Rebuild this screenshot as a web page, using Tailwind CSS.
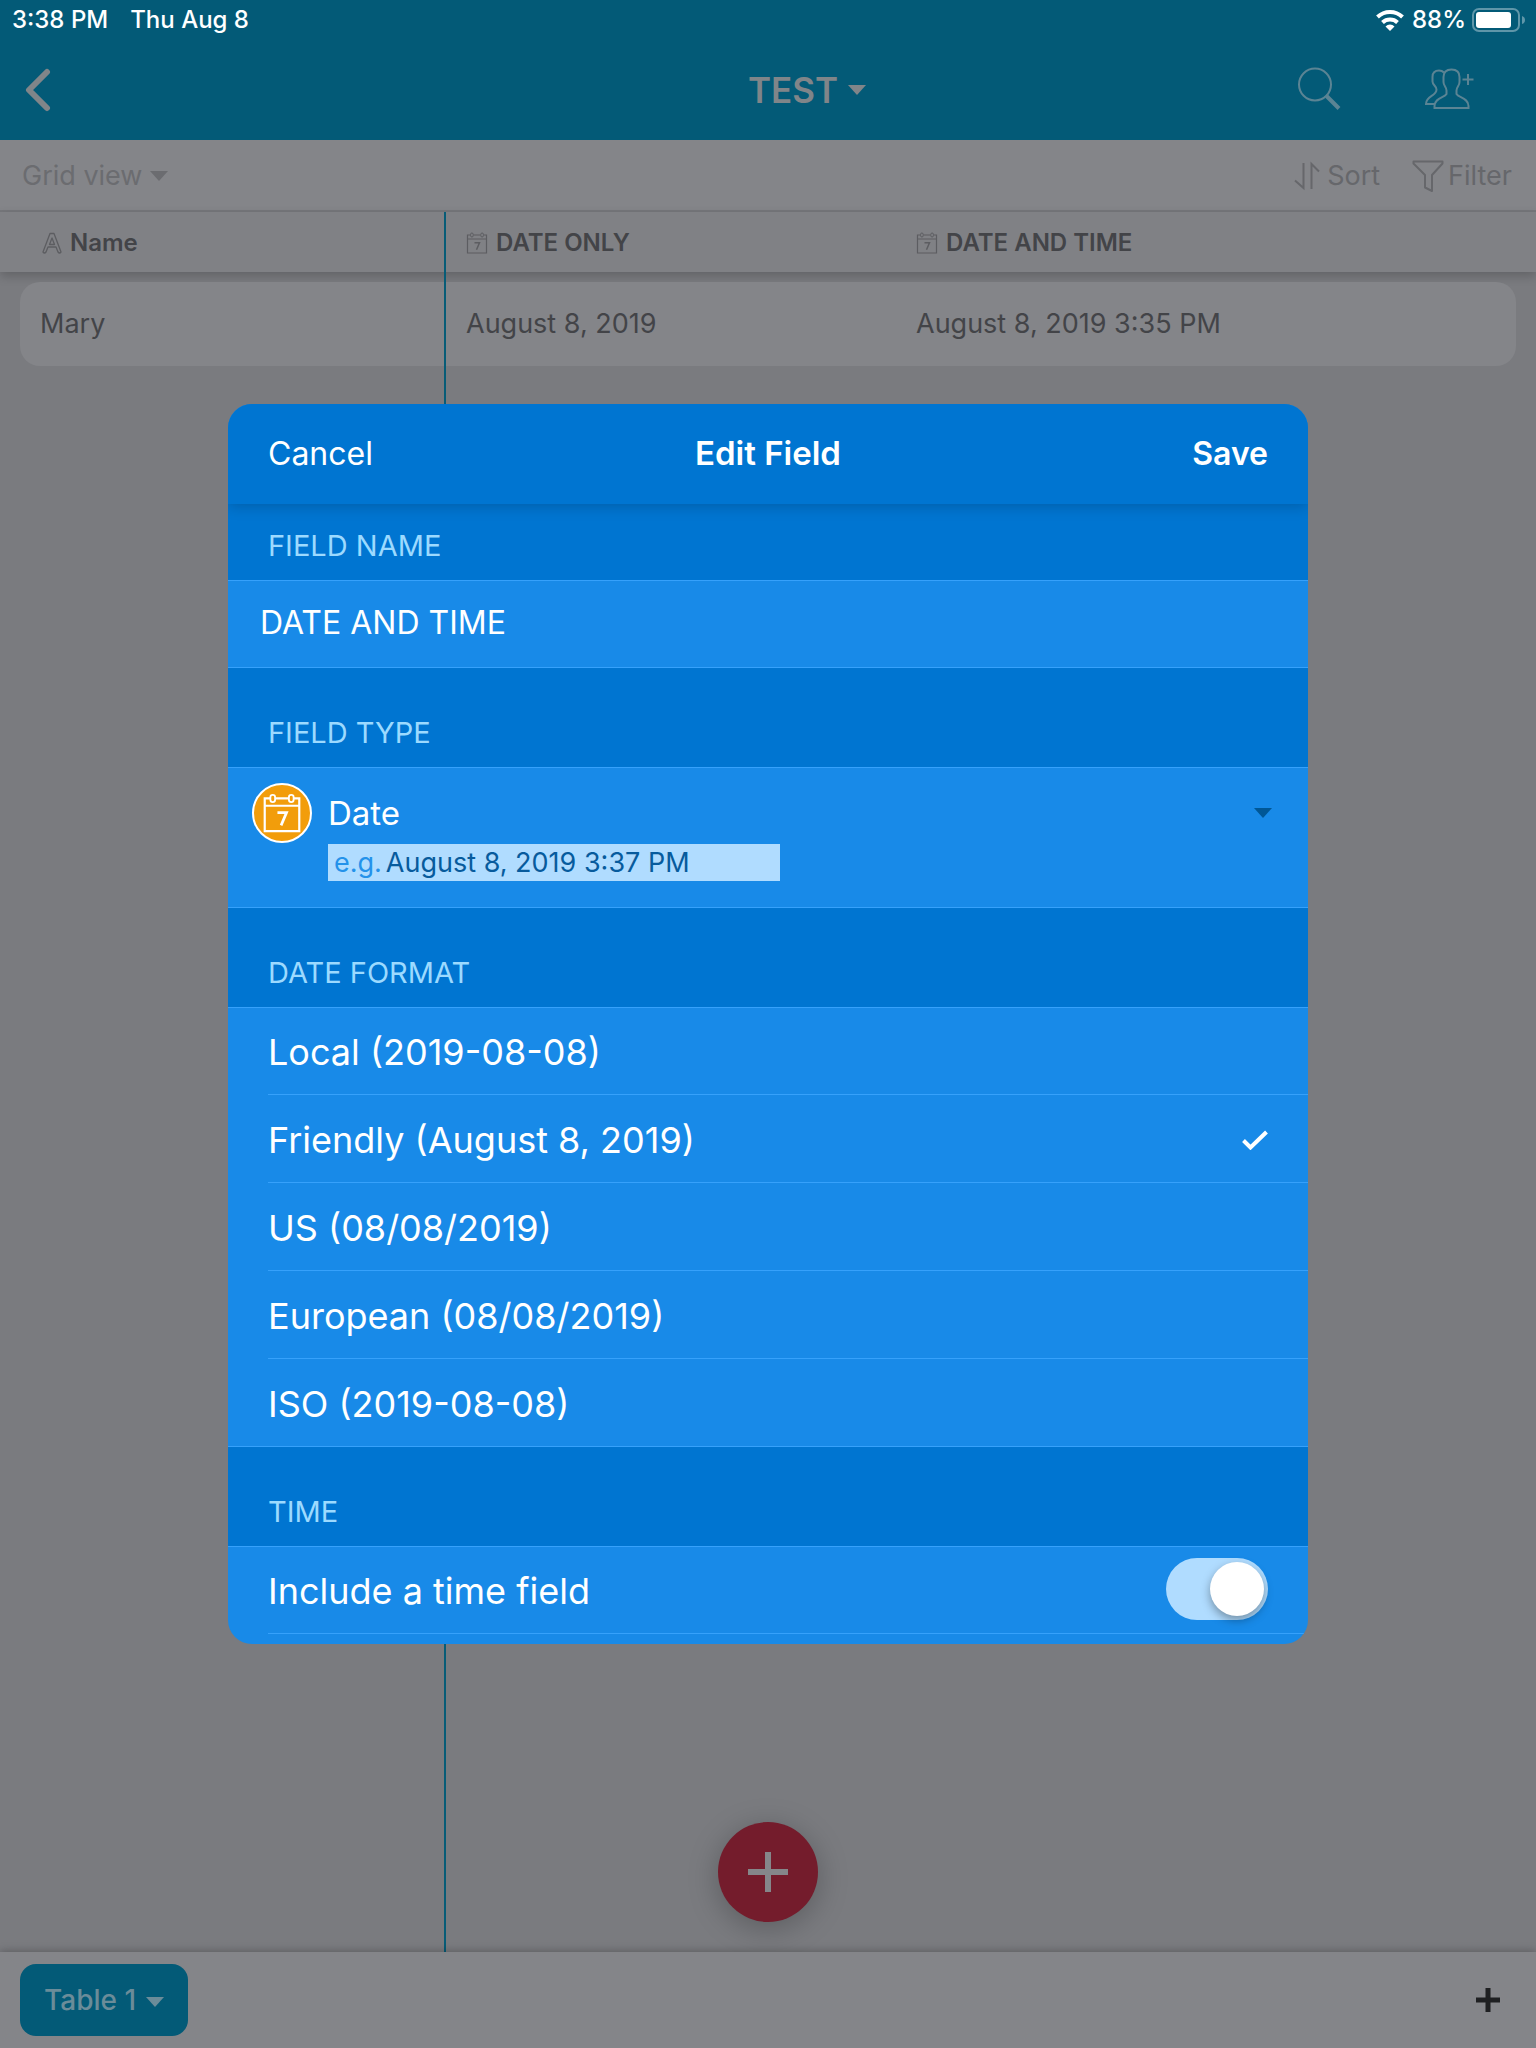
<!DOCTYPE html>
<html lang="en">
<head>
  <meta charset="UTF-8" />
  <meta name="viewport" content="width=device-width, initial-scale=1" />
  <title>TEST - Edit Field</title>
  <script src="https://cdn.jsdelivr.net/npm/@tailwindcss/browser@4"></script>
</head>
<body class="relative flex min-h-screen flex-col bg-[#7a7b7f] font-['Inter','Liberation_Sans',sans-serif]">

<svg class="hidden">
  <symbol id="calendar" viewBox="0 0 22 24">
    <path d="M4.500 4H1.500v18h19V4h-3M7.500 4h7M1.500 8h19" fill="none" stroke="currentColor" stroke-width="1.200" />
    <rect x="4.600" y="2" width="2.600" height="4" rx="1.300" fill="none" stroke="currentColor" />
    <rect x="14.800" y="2" width="2.600" height="4" rx="1.300" fill="none" stroke="currentColor" />
    <path d="M8.500 11.800h5l-3 7" fill="none" stroke="currentColor" stroke-width="1.500" />
  </symbol>
  <symbol id="caret" viewBox="0 0 18 10">
    <path d="M0 0h18L9 10z" fill="currentColor" />
  </symbol>
</svg>

<!-- Top bar -->
<header class="bg-[#035a77]">
  <div class="flex h-10 items-center justify-between pl-3 pr-2.5 text-2xl font-medium text-white">
    <div class="flex gap-[22px]">
      <span>3:38 PM</span>
      <span>Thu Aug 8</span>
    </div>
    <div class="flex items-center gap-1.5">
      <svg class="h-6 w-8" viewBox="0 0 32 24" fill="none" stroke="#fff" stroke-width="4">
        <path d="M3.500 9a18 18 0 0 1 25 0" />
        <path d="M8.500 14.500a11 11 0 0 1 15 0" />
        <path d="M16 23l-4.500-4.600a6.500 6.500 0 0 1 9 0z" fill="#fff" stroke="none" />
      </svg>
      <span>88%</span>
      <svg class="h-6 w-[54px]" viewBox="0 0 54 24">
        <rect x="1" y="1" width="46" height="22" rx="6" fill="none" stroke="#5f96a9" stroke-width="2" />
        <rect x="4" y="4" width="35" height="16" rx="3" fill="#fff" />
        <path d="M50 8q3 1 3 4t-3 4z" fill="#5f96a9" />
      </svg>
    </div>
  </div>
  <div class="grid h-[100px] grid-cols-[1fr_auto_1fr] items-center text-[#808589]">
    <button class="ml-6 w-8" aria-label="Back">
      <svg class="h-11 w-7" viewBox="0 0 28 44" fill="none" stroke="currentColor" stroke-width="6" stroke-linecap="round" stroke-linejoin="round">
        <path d="M23 4L5 22l18 18" />
      </svg>
    </button>
    <button class="ml-[78px] flex items-center gap-2.5 text-[35px] font-semibold">
      TEST
      <svg class="h-2.5 w-[18px]"><use href="#caret" /></svg>
    </button>
    <div class="flex items-center justify-end gap-[83px] pr-[60px] pb-0.5 text-[#5b8494]">
      <button aria-label="Search">
        <svg class="size-11" viewBox="0 0 44 44" fill="none" stroke="currentColor">
          <circle cx="18" cy="17.500" r="16" stroke-width="2" />
          <path d="M29.500 29L42 41.500" stroke-width="4" />
        </svg>
      </button>
      <button aria-label="Share">
        <svg class="h-11 w-[52px]" viewBox="0 0 52 44" fill="none" stroke="currentColor" stroke-width="2">
          <path d="M27.500 2.500c5.500 0 8 3 8 7.500v5c0 4-3 5-3 8.500v3.500c2 3.500 12 4 12 12v2h-34v-2c0-8 10-8.500 12-12v-3.500c0-3.500-3-4.500-3-8.500v-5c0-4.500 2.500-7.500 8-7.500z" />
          <path d="M20 5.500c-1.500-1.500-3-2-5-2-4.500 0-6.500 2.500-6.500 6.500v4.500c0 3.500 4 4.500 4 8 0 7-10.500 6-10.500 14.500h9" />
          <path d="M38.500 12.500h11M44 7v11" />
        </svg>
      </button>
    </div>
  </div>
</header>

<!-- View bar -->
<div class="flex h-[72px] items-center justify-between border-b-2 border-[#76777b] bg-[#848589] pt-0.5 pl-[22px] pr-6 text-[27px] text-[#6b6c70]">
  <button class="flex items-center gap-2">
    Grid view
    <svg class="h-2.5 w-[18px]"><use href="#caret" /></svg>
  </button>
  <div class="flex gap-8 text-[#66676b]">
    <button class="flex items-center gap-1.5">
      <svg class="h-8 w-7" viewBox="0 0 28 32" fill="none" stroke="currentColor" stroke-width="2">
        <path d="M10.500 3v25L2 20.500M18.500 29V4l7.500 7.500" />
      </svg>
      Sort
    </button>
    <button class="flex items-center gap-1">
      <svg class="h-8 w-8" viewBox="0 0 32 32" fill="none" stroke="currentColor" stroke-width="2" stroke-linejoin="round">
        <path d="M1.500 1.500h29v2L20 15v16l-7-3.500V15L1.500 3.500z" />
      </svg>
      Filter
    </button>
  </div>
</div>

<!-- Grid -->
<main class="relative grow">
  <table class="w-full table-fixed border-separate border-spacing-0 text-left text-[27px] text-[#434448]">
    <thead class="shadow-[0_4px_10px_rgb(0_0_0/0.2)]">
      <tr class="h-[60px] bg-[#808185] text-2xl">
        <th class="w-[446px] pt-0.5 pl-[42px] font-semibold">
          <div class="flex items-center gap-2">
            <svg class="h-6 w-5 text-[#5c5d61]" viewBox="0 0 20 24" fill="none" stroke="currentColor" stroke-linejoin="round">
              <path d="M8 2.500h4L19 21q-1.500 2-3 0l-2-5H6l-2 5q-1.500 2-3 0zM10 7l-2.500 6.500h5z" stroke-width="1.300" />
            </svg>
            Name
          </div>
        </th>
        <th class="w-[450px] pt-0.5 pl-5 font-semibold">
          <div class="flex items-center gap-2">
            <svg class="h-6 w-[22px] text-[#5c5d61]"><use href="#calendar" /></svg>
            DATE ONLY
          </div>
        </th>
        <th class="pt-0.5 pl-5 font-semibold">
          <div class="flex items-center gap-2">
            <svg class="h-6 w-[22px] text-[#5c5d61]"><use href="#calendar" /></svg>
            DATE AND TIME
          </div>
        </th>
      </tr>
    </thead>
    <tbody>
      <tr>
        <td class="pt-2.5 pl-5"><div class="flex h-[84px] items-center rounded-l-[20px] bg-[#848589] pl-5">Mary</div></td>
        <td class="pt-2.5"><div class="flex h-[84px] items-center bg-[#848589] pl-5">August 8, 2019</div></td>
        <td class="pt-2.5 pr-5"><div class="flex h-[84px] items-center rounded-r-[20px] bg-[#848589] pl-5">August 8, 2019 3:35 PM</div></td>
      </tr>
    </tbody>
  </table>
  <div class="absolute inset-y-0 left-[444px] w-0.5 bg-[#075c77]"></div>
  <button class="absolute bottom-[30px] left-1/2 flex size-[100px] -translate-x-1/2 items-center justify-center rounded-full bg-[#741c2c] text-[#85868a] shadow-[0_6px_30px_rgb(0_0_0/0.25)]" aria-label="Add record">
    <svg class="size-10" viewBox="0 0 40 40" stroke="currentColor" stroke-width="6"><path d="M0 20h40M20 0v40" /></svg>
  </button>
</main>

<!-- Table tabs -->
<footer class="relative flex h-24 items-center justify-between bg-[#848589] pl-5 pr-[35px] shadow-[0_-1px_8px_rgb(0_0_0/0.25)]">
  <button class="flex h-[72px] items-center gap-2.5 rounded-2xl bg-[#035a77] px-6 text-[28px] font-medium text-[#6b8c99]">
    Table 1
    <svg class="mt-1 h-2.5 w-[18px]"><use href="#caret" /></svg>
  </button>
  <button class="text-[#1f2022]" aria-label="Add table">
    <svg class="size-[26px]" viewBox="0 0 26 26" stroke="currentColor" stroke-width="5"><path d="M1 13h24M13 1v24" /></svg>
  </button>
</footer>

<!-- Edit field dialog -->
<div class="absolute inset-0 flex items-center justify-center">
  <form class="w-full max-w-[1080px] overflow-hidden rounded-3xl bg-[#188ae8] pb-2.5 text-white" role="dialog" aria-label="Edit Field" onsubmit="event.preventDefault()">
    <div class="relative grid h-[100px] grid-cols-3 items-center bg-[#0075d1] px-10 text-[33px] shadow-[0_2px_14px_rgb(0_0_0/0.2)]">
      <button type="button" class="justify-self-start text-[32px]">Cancel</button>
      <h2 class="text-center font-semibold">Edit Field</h2>
      <button type="submit" class="justify-self-end text-[32px] font-semibold">Save</button>
    </div>

    <div class="flex h-[76px] items-end bg-[#0075d1] px-10 pb-4 text-[29px] leading-9 text-[#9cdaff]">
      <label for="fieldName">FIELD NAME</label>
    </div>
    <input id="fieldName" type="text" value="DATE AND TIME" class="block h-[88px] w-full border-y border-[#36a1fb] px-8 pb-1 text-[32px] outline-none" />

    <div class="flex h-[99px] items-end bg-[#0075d1] px-10 pb-4 text-[29px] leading-9 text-[#9cdaff]">
      <label for="fieldType">FIELD TYPE</label>
    </div>
    <div class="flex gap-4 border-y border-[#36a1fb] pt-[15px] pb-[26px] pl-6">
      <div class="flex size-[60px] shrink-0 items-center justify-center rounded-full border-2 border-white bg-[#f29d0b]">
        <svg class="h-11 w-10"><use href="#calendar" /></svg>
      </div>
      <div class="grow">
        <div class="relative">
          <select id="fieldType" class="block h-[61px] w-full appearance-none text-[33px] outline-none">
            <option>Date</option>
          </select>
          <svg class="pointer-events-none absolute top-[25px] right-9 h-2.5 w-[18px] text-[#005796]"><use href="#caret" /></svg>
        </div>
        <p class="flex h-[37px] w-[452px] items-center gap-1 bg-[#b0dcff] px-1.5 pt-0.5 text-[27px] text-[#075b9d]">
          <span class="text-[#2492ea]">e.g.</span>August 8, 2019 3:37 PM
        </p>
      </div>
    </div>

    <fieldset>
      <legend class="flex h-[99px] w-full items-end bg-[#0075d1] px-10 pb-4 text-[29px] leading-9 text-[#9cdaff]">DATE FORMAT</legend>
      <div class="border-y border-[#36a1fb] pl-10 text-[36px]">
        <label class="flex h-[87px] items-center justify-between border-b border-[#36a1fb] pt-0.5 pr-10">
          Local (2019-08-08)
          <input type="radio" name="format" class="peer sr-only" />
        </label>
        <label class="flex h-[88px] items-center justify-between border-b border-[#36a1fb] pt-0.5 pr-10">
          Friendly (August 8, 2019)
          <input type="radio" name="format" class="peer sr-only" checked />
          <svg class="hidden h-5 w-[26px] peer-checked:block" viewBox="0 0 26 20" fill="none" stroke="currentColor" stroke-width="4"><path d="M1.500 10.500L8.500 17.500L24.500 2" /></svg>
        </label>
        <label class="flex h-[88px] items-center justify-between border-b border-[#36a1fb] pt-0.5 pr-10">
          US (08/08/2019)
          <input type="radio" name="format" class="peer sr-only" />
        </label>
        <label class="flex h-[88px] items-center justify-between border-b border-[#36a1fb] pt-0.5 pr-10">
          European (08/08/2019)
          <input type="radio" name="format" class="peer sr-only" />
        </label>
        <label class="flex h-[87px] items-center justify-between pt-0.5 pr-10">
          ISO (2019-08-08)
          <input type="radio" name="format" class="peer sr-only" />
        </label>
      </div>
    </fieldset>

    <fieldset>
      <legend class="flex h-[99px] w-full items-end bg-[#0075d1] px-10 pb-4 text-[29px] leading-9 text-[#9cdaff]">TIME</legend>
      <div class="border-t border-[#36a1fb] pl-10 text-[36px]">
        <label class="flex h-[87px] items-center justify-between border-b border-[#36a1fb] pt-0.5 pr-10">
          Include a time field
          <input type="checkbox" role="switch" checked class="relative mb-1 h-[62px] w-[102px] appearance-none rounded-full bg-[#b0dcff] before:absolute before:top-1 before:left-1 before:size-[54px] before:rounded-full before:bg-white before:shadow-[0_4px_10px_rgb(0_0_0/0.35)] before:content-[''] checked:before:left-11" />
        </label>
      </div>
    </fieldset>
  </form>
</div>

</body>
</html>
